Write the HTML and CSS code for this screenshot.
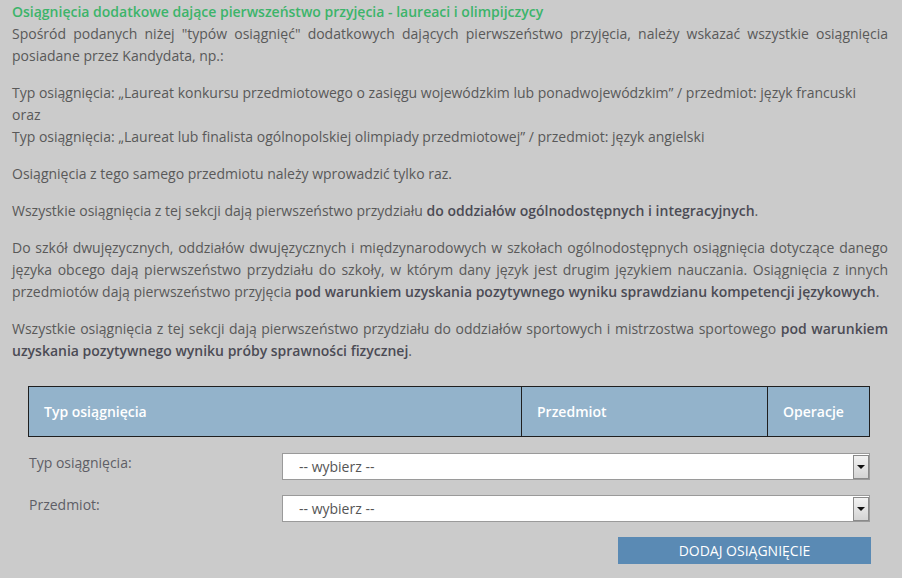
FILE: index.html
```html
<!DOCTYPE html>
<html lang="pl">
<head>
<meta charset="utf-8">
<title>Osiągnięcia</title>
<link rel="stylesheet" href="styles.css">
</head>
<body>
<div class="page">
  <h2 class="title">Osiągnięcia dodatkowe dające pierwszeństwo przyjęcia - laureaci i olimpijczycy</h2>
  <p class="just">Spośród podanych niżej "typów osiągnięć" dodatkowych dających pierwszeństwo przyjęcia, należy wskazać wszystkie osiągnięcia posiadane przez Kandydata, np.:</p>
  <p>Typ osiągnięcia: „Laureat konkursu przedmiotowego o zasięgu wojewódzkim lub ponadwojewódzkim” / przedmiot: język francuski<br>oraz<br>Typ osiągnięcia: „Laureat lub finalista ogólnopolskiej olimpiady przedmiotowej” / przedmiot: język angielski</p>
  <p>Osiągnięcia z tego samego przedmiotu należy wprowadzić tylko raz.</p>
  <p>Wszystkie osiągnięcia z tej sekcji dają pierwszeństwo przydziału <b>do oddziałów ogólnodostępnych i integracyjnych</b>.</p>
  <p class="just">Do szkół dwujęzycznych, oddziałów dwujęzycznych i międzynarodowych w szkołach ogólnodostępnych osiągnięcia dotyczące danego języka obcego dają pierwszeństwo przydziału do szkoły, w którym dany język jest drugim językiem nauczania. Osiągnięcia z innych przedmiotów dają pierwszeństwo przyjęcia <b>pod warunkiem uzyskania pozytywnego wyniku sprawdzianu kompetencji językowych</b>.</p>
  <p class="just">Wszystkie osiągnięcia z tej sekcji dają pierwszeństwo przydziału do oddziałów sportowych i mistrzostwa sportowego <b>pod warunkiem uzyskania pozytywnego wyniku próby sprawności fizycznej</b>.</p>

  <div class="form">
    <table class="grid">
      <thead>
        <tr>
          <th class="c1">Typ osiągnięcia</th>
          <th class="c2">Przedmiot</th>
          <th class="c3">Operacje</th>
        </tr>
      </thead>
    </table>

    <div class="row first">
      <label class="lbl" for="typ">Typ osiągnięcia:</label>
      <div class="selwrap">
        <select id="typ" class="sel"><option>-- wybierz --</option></select>
        <span class="arrow"></span>
      </div>
    </div>
    <div class="row">
      <label class="lbl" for="prz">Przedmiot:</label>
      <div class="selwrap">
        <select id="prz" class="sel"><option>-- wybierz --</option></select>
        <span class="arrow"></span>
      </div>
    </div>
    <div class="actions">
      <button class="btn" type="button">DODAJ OSIĄGNIĘCIE</button>
    </div>
  </div>
</div>
</body>
</html>
```

FILE: styles.css
```css
html, body {
  margin: 0;
  padding: 0;
  background: #cbcbcb;
}
body {
  font-family: "Open Sans", "Liberation Sans", sans-serif;
  font-size: 14px;
  line-height: 22px;
  color: #595959;
}
.page {
  padding: 1px 14px 0 12px;
}
.title {
  margin: 0;
  font-size: 14px;
  font-weight: 600;
  line-height: 22px;
  color: #3cb46a;
}
p {
  margin: 0 0 15px 0;
}
.just {
  text-align: justify;
}
b {
  font-weight: 600;
  color: #4b4b55;
}
.form {
  padding: 9px 18px 0 16px;
}
.grid {
  width: 100%;
  border-collapse: collapse;
  border: 1px solid #1f1f1f;
}
.grid th {
  background: #93b3cb;
  color: #ffffff;
  font-weight: 600;
  text-align: left;
  height: 49px;
  padding: 0 15px;
  border: 1px solid #1f1f1f;
  vertical-align: middle;
}
.grid .c1 { width: 462px; }
.grid .c2 { width: 215px; }
.row {
  display: flex;
  align-items: flex-start;
  margin-top: 15px;
}
.row.first {
  margin-top: 16px;
}
.lbl {
  width: 253px;
  flex: none;
  padding-left: 1px;
  margin-top: -1px;
  color: #5e5e66;
}
.selwrap {
  position: relative;
  flex: 1;
}
.sel {
  -webkit-appearance: none;
  appearance: none;
  display: block;
  width: 100%;
  height: 27px;
  margin: 0;
  padding: 0 0 0 16px;
  border: 1px solid #9a9a9a;
  border-radius: 0;
  background: #ffffff;
  font-family: "Open Sans", "Liberation Sans", sans-serif;
  font-size: 14px;
  color: #555555;
}
.arrow {
  position: absolute;
  right: 1px;
  top: 2px;
  width: 14px;
  height: 22px;
  border: 1px solid #8a8a8a;
  background: linear-gradient(#f2f2f2, #d4d4d4);
  pointer-events: none;
}
.arrow::after {
  content: "";
  position: absolute;
  left: 3px;
  top: 9px;
  border-left: 4px solid transparent;
  border-right: 4px solid transparent;
  border-top: 4px solid #111111;
}
.actions {
  display: flex;
  justify-content: flex-end;
  margin-top: 15px;
}
.btn {
  width: 253px;
  height: 27px;
  margin-right: -1px;
  border: none;
  background: #5a8ab4;
  color: #ffffff;
  font-family: "Open Sans", "Liberation Sans", sans-serif;
  font-size: 14px;
  padding: 0;
}
```
